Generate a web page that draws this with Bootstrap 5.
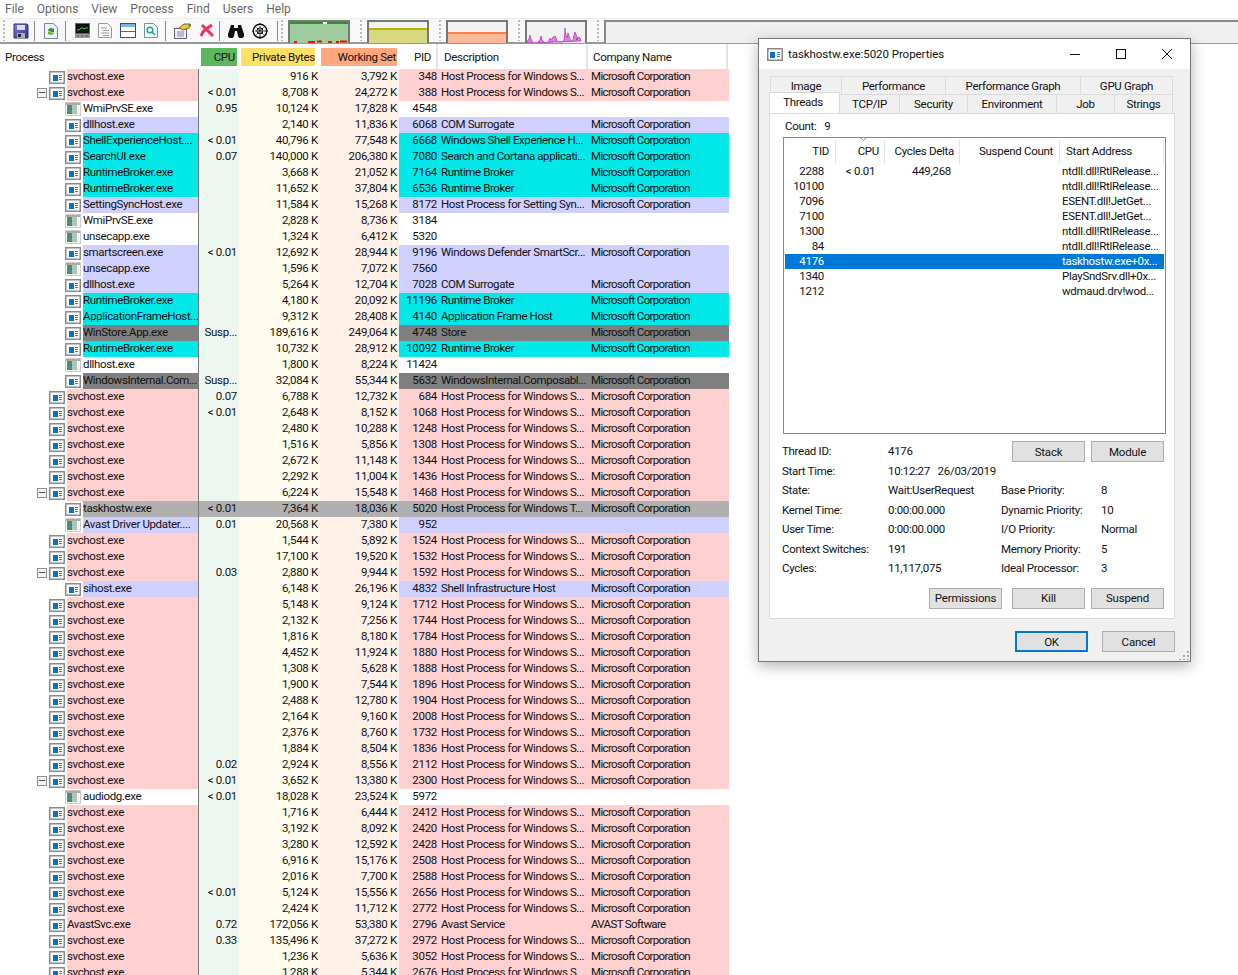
<!DOCTYPE html>
<html lang="en"><head><meta charset="utf-8"><title>Process Explorer</title>
<link rel="stylesheet" href="https://cdn.jsdelivr.net/npm/bootstrap@5.3.0/dist/css/bootstrap.min.css">
<style>
html,body{height:975px;overflow:hidden;background:#fff}
body{font:11.5px/16px Roboto,"Liberation Sans",sans-serif;letter-spacing:-.3px;color:#111;position:relative}
.menubar{height:18px;padding-left:5px;gap:13px;color:#666;font-size:12px;line-height:19px;letter-spacing:0}
.menubar span{display:block}
.toolbar{height:26px;background:#f8f8f8;border-bottom:2px solid #999;border-top:1px solid #eee}
.tb{flex:none;display:block}
.grip{width:2px;height:21px;flex:none;background:repeating-linear-gradient(#bbb 0 2px,transparent 2px 4px)}
.sep{width:1px;height:20px;background:#888;flex:none}
.graph{width:62px;height:23px;flex:none;border:2px solid #777;border-bottom:0;display:block;margin-top:2px}
.m3{margin-left:3px}.m4{margin-left:4px}.m5{margin-left:5px}.m7{margin-left:7px}.m8{margin-left:8px}.m9{margin-left:9px}.m10{margin-left:10px}
.blank{width:634px;height:23px;border:2px solid #888;border-right:0;border-bottom:0;flex:none;background:#f0f0f0;margin:2px 0 0 5px}
.col-p{width:199px}.col-c{width:40px}.col-pb{width:81px}.col-ws{width:79px}.col-pid{width:40px}.col-d{width:150px}.col-co{width:140px}
.hdr{height:25px;align-items:center;white-space:nowrap}
.hdr>div{flex:none;height:18px;line-height:19px}
.hdr .col-p{padding-left:5px;border:0}
.hdr .h-c{background:#5cb85c;margin-left:2px;width:36px;text-align:right;padding-right:2px}
.hdr .h-pb{background:#ffdf66;margin-left:4px;width:74px;text-align:right}
.hdr .h-ws{background:#ffa77d;margin-left:6px;width:76px;text-align:right;padding-right:1px}
.hdr .col-pid{text-align:right;padding-right:5px;border-right:2px solid #e4e4e4;width:41px;height:25px;line-height:26px}
.hdr .col-d{border-right:2px solid #e4e4e4;width:150px;padding-left:6px;height:25px;line-height:26px}
.hdr .col-co{width:140px;padding-left:5px;border-right:2px solid #e4e4e4;height:25px;line-height:26px}
.stripes{height:906px;overflow:hidden}
.row-p{height:16px;line-height:15px;width:729px;white-space:nowrap}
.row-p>div{flex:none;overflow:hidden}
.row-p .col-p{border-right:1px solid #777;display:flex;align-items:center}
.row-p .col-c{background:#edf7ef;padding-right:2px;text-align:right}
.row-p .col-pb{background:#fffbee;text-align:right;padding-right:2px}
.row-p .col-ws{background:#fff0e8;padding-right:2px;text-align:right}
.row-p .col-pid{padding-right:2px;text-align:right}
.row-p .col-d{padding-left:2px;letter-spacing:-.4px}
.row-p .col-co{padding-left:2px;letter-spacing:-.65px}
.box{width:10px;height:10px;border:1px solid #919191;background:#f4f4f4;margin:0 2px 0 37px;position:relative;flex:none}
.box:after{content:"";position:absolute;left:1px;right:1px;top:3px;height:1px;background:#444}
.sp0{width:49px;flex:none}.sp1{width:65px;flex:none}
.ic{flex:none;display:block;margin-right:2px}
.name{flex:1;min-width:0;height:16px;overflow:hidden;letter-spacing:-.36px}
.pink .name,.pink .rest{background:#ffd0d0}.blue .name,.blue .rest{background:#d0d0ff}
.cyan .name,.cyan .rest{background:#00e8e8}.gray .name,.gray .rest{background:#808080}
.sel .name,.sel .rest,.sel .col-c,.sel .col-pb,.sel .col-ws{background:#b0b0b0!important}
.rest{display:flex;flex:none;width:330px}
.rest>div{flex:none;overflow:hidden}
.dlg{position:absolute;left:758px;top:38px;width:433px;height:624px;background:#f0f0f0;border:1px solid #777;box-shadow:0 4px 14px rgba(0,0,0,.3)}
.tbar{height:30px;background:#fff;padding:0 0 0 8px;font-size:11.5px;letter-spacing:-.05px;color:#111}
.wbtn{width:46px;height:30px;flex:none;display:block}
.tabs{margin:7px 0 0 10px;width:406px}
.tr{display:flex;height:18px;margin-left:1px}
.tr>div{border:1px solid #dcdcdc;border-bottom:0;border-left:0;text-align:center;line-height:19px;flex:none}
.tr>div:first-child{border-left:1px solid #dcdcdc}
.tr2{margin-left:0;height:19px}
.tab-a{background:#fff;margin-top:-2px;height:21px;position:relative;z-index:1;border-color:#d9d9d9!important}
.t1{width:72px}.t2{width:104px}.t3{width:135px}.t4{width:92px}.u1{width:71px;padding-right:3px}.u2{width:60px}.u3{width:68px}.u4{width:89px}.u5{width:58px}.u6{width:58px}
.panel{background:#fff;border:1px solid #d9d9d9;width:406px;height:506px;margin:0 0 0 10px;padding:5px 8px 0 13px}
.count{height:18px;line-height:14px;padding-left:2px}
.lv{width:383px;height:297px;border:1px solid #888;padding:2px 1px}
.lvh{height:24px;line-height:23px}
.lvh>div{flex:none;border-right:1px solid #e4e4e4;height:24px;text-align:right;position:relative}
.lvr{height:15px;line-height:14px;white-space:nowrap}
.lvr>div{flex:none;overflow:hidden}
.w1{width:51px;padding-right:6px}.w2{width:49px;padding-right:5px}.w3{width:75px;padding-right:5px}.w4{width:100px;padding-right:6px}.w5{width:104px}
.lvr .w1{text-align:right;padding-right:12px}.lvr .w2{text-align:center;padding-right:0}.lvr .w3{text-align:right;padding-right:9px;margin-left:-9px;width:84px}
.lvr .w5{padding-left:2px}
.lvh .w5{padding-left:6px;text-align:left}
.lvsel{background:#0078d7;color:#fff}
.caret{position:absolute;left:24px;top:-3px;width:7px;height:4px}
.irow{height:19.5px;line-height:19.5px;display:flex;align-items:center;margin-left:-1px}
.irow>span{flex:none}
.l1{width:106px}.v1{width:113px}.l2{width:100px}.v2{width:60px}
.wbtn2{width:73px;height:21px;background:#e1e1e1;border:1px solid #adadad;color:#111;font-size:11.5px;line-height:18px;padding:0;border-radius:0;letter-spacing:-.2px;flex:none}
.btnrow{gap:6px;margin-left:auto;margin-right:2px}
.bt3{margin-top:9px;gap:6px}
.kill{margin-left:4px}
.btm{margin:12px 0 0 0;padding-right:15px;gap:14px}
.btn-ok{border:2px solid #0078d7}
.rz{position:absolute;right:1px;bottom:1px;width:10px;height:10px}
</style></head><body>
<div class="menubar d-flex"><span>File</span><span>Options</span><span>View</span><span>Process</span><span>Find</span><span>Users</span><span>Help</span></div>
<div class="toolbar d-flex align-items-center">
<span class="grip m3"></span>
<svg class="tb m8" width="16" height="16" viewBox="0 0 16 16"><defs><linearGradient id="fl" x1="0" y1="0" x2="1" y2="1"><stop offset="0" stop-color="#7f7fe0"/><stop offset="1" stop-color="#2d2d80"/></linearGradient></defs><path d="M1 1h13l1 1v13H1z" fill="url(#fl)" stroke="#33336a"/><rect x="4" y="2" width="8" height="5" fill="#dcdcf4"/><rect x="4" y="10" width="8" height="5" fill="#aaa"/><rect x="5" y="11" width="3" height="3" fill="#222"/></svg>
<span class="sep m5"></span>
<svg class="tb m9" width="14" height="16" viewBox="0 0 14 16"><path d="M.5.500h9l4 4v11H.5z" fill="#eef0fa" stroke="#7a86a8"/><path d="M4 7a3 3 0 0 1 5-1l1-1v4H6l1-1a2 2 0 0 0-2 1z" fill="#2a9a2a"/><path d="M10 10a3 3 0 0 1-5 1l-1 1V9h4l-1 1a2 2 0 0 0 2-1z" fill="#6cb82a"/></svg>
<span class="sep m7"></span>
<svg class="tb m9" width="15" height="15" viewBox="0 0 15 15"><rect x=".5" y=".5" width="14" height="10" fill="#111" stroke="#666"/><path d="M2 7h2l2-2h2l1 1 2-1h2" fill="none" stroke="#2ee02e"/><rect y="11" width="15" height="4" fill="#999"/><path d="M2 13h2M6 13h2M10 13h3" stroke="#555"/></svg>
<svg class="tb m8" width="14" height="15" viewBox="0 0 14 15"><path d="M.5.500h9l4 4v10H.5z" fill="#fafafa" stroke="#999"/><path d="M3 5h6M5 7.500h6M3 10h8M5 12.500h6" stroke="#999"/></svg>
<svg class="tb m8" width="16" height="15" viewBox="0 0 16 15"><rect x=".5" y=".5" width="15" height="14" fill="#fff" stroke="#2f4f80"/><rect x="1" y="1" width="14" height="3" fill="#7fb2e5"/><path d="M1 8.500h14" stroke="#3a6ea8"/></svg>
<svg class="tb m8" width="14" height="15" viewBox="0 0 14 15"><path d="M.5.500h9l4 4v10H.5z" fill="#f4fbfb" stroke="#6a9a9a"/><circle cx="6" cy="7" r="2.800" fill="none" stroke="#2b9a9a" stroke-width="1.500"/><path d="M8 9l3 3" stroke="#2b9a9a" stroke-width="1.500"/></svg>
<span class="sep m7"></span>
<svg class="tb m8" width="17" height="16" viewBox="0 0 17 16"><rect x=".5" y="5.500" width="12" height="10" fill="#eef" stroke="#667"/><path d="M3 9h7M3 11h7M3 13h7" stroke="#88a"/><path d="M5 5l5-4h6l-1 4-6 2z" fill="#e8c04a" stroke="#8a6a10"/><path d="M14 1h3v3z" fill="#2a9a4a"/></svg>
<svg class="tb m9" width="15" height="15" viewBox="0 0 15 15"><path d="M2 2l11 11" stroke="#f0305a" stroke-width="3"/><path d="M12 2L6 6l-3 3-2 4" fill="none" stroke="#f0305a" stroke-width="3"/></svg>
<span class="sep m4"></span>
<svg class="tb m8" width="16" height="14" viewBox="0 0 16 14"><path d="M3 1h3v3h4V1h3l3 9a3 3 0 0 1-6 2L9 7H7l-1 5a3 3 0 0 1-6-2z" fill="#111"/></svg>
<svg class="tb m8" width="16" height="16" viewBox="0 0 16 16"><circle cx="8" cy="8" r="6.800" fill="#fff" stroke="#111" stroke-width="1.400"/><circle cx="8" cy="8" r="3" fill="none" stroke="#111"/><path d="M8 0v16M0 8h16M3 3l10 10M13 3L3 13" stroke="#111" stroke-dasharray="2 1"/></svg>
<span class="sep m9"></span>
<span class="grip m3"></span>
<svg class="graph m5" viewBox="0 0 58 21"><rect width="58" height="21" fill="#9fcc9f"/><rect width="58" height="2" fill="#2f8f2f"/><rect x="33" width="4" height="2" fill="#fff"/><path d="M4 20h3M18 20h7M27 19.500h5M38 20h4M46 20h3M50 19.500h7" stroke="#e81010" stroke-width="2"/></svg>
<span class="grip m10"></span>
<svg class="graph m5" viewBox="0 0 58 21"><rect width="58" height="21" fill="#f2f2f2"/><rect y="6" width="58" height="15" fill="#d8d880"/><rect y="6" width="58" height="2" fill="#b5b500"/></svg>
<span class="grip m10"></span>
<svg class="graph m5" viewBox="0 0 58 21"><rect width="58" height="21" fill="#f2f2f2"/><rect y="10" width="58" height="11" fill="#ffb899"/><rect y="10" width="58" height="2" fill="#ff7f3f"/></svg>
<span class="grip m10"></span>
<svg class="graph m5" viewBox="0 0 58 21"><rect width="58" height="21" fill="#f2f2f2"/><path d="M0 21l1-3 1-1 1-4 1 4 1 2 1 2h4l2-2 1-1 1-4 1 4 1 1 2 2h3l2-5 1 2 1-1 1-2 2-1 1 2 1 3 1 1h5l1-2 1-8 2 6 1-5 2 6 1 2h2l1-6 1-3 2 5 1 1 1-1 1 1 1 3z" fill="#e080e0" stroke="#b030b0" stroke-width=".7"/><path d="M38 6v4M50 16v2" stroke="#3030e0"/></svg>
<span class="grip m10"></span>
<span class="blank"></span>
</div>
<div class="hdr d-flex">
<div class="col-p">Process</div><div class="h-c">CPU</div><div class="h-pb">Private Bytes</div><div class="h-ws">Working Set</div><div class="col-pid">PID</div><div class="col-d">Description</div><div class="col-co">Company Name</div>
</div>
<div class="stripes" id="rows"></div>

<div class="dlg">
<div class="tbar d-flex align-items-center">
<svg width="16" height="13" viewBox="0 0 16 13"><rect x=".75" y=".75" width="14.500" height="11.500" fill="#fff" stroke="#888" stroke-width="1.500"/><rect x="3" y="4" width="5" height="6" fill="#0a6fd0"/><path d="M10 4.500h3M10 6.500h3M10 8.500h3" stroke="#4a78b0"/></svg>
<span class="m5">taskhostw.exe:5020 Properties</span>
<svg class="wbtn ms-auto" viewBox="0 0 46 30"><path d="M18 15.500h10" stroke="#111"/></svg>
<svg class="wbtn" viewBox="0 0 46 30"><rect x="18.500" y="10.500" width="9" height="9" fill="none" stroke="#111"/></svg>
<svg class="wbtn" viewBox="0 0 46 30"><path d="M18 10l10 10M28 10L18 20" stroke="#111"/></svg>
</div>
<div class="tabs">
<div class="tr"><div class="t1">Image</div><div class="t2">Performance</div><div class="t3">Performance Graph</div><div class="t4">GPU Graph</div></div>
<div class="tr tr2"><div class="tab-a u1">Threads</div><div class="u2">TCP/IP</div><div class="u3">Security</div><div class="u4">Environment</div><div class="u5">Job</div><div class="u6">Strings</div></div>
</div>
<div class="panel">
<div class="count">Count:&nbsp;&nbsp;&nbsp;9</div>
<div class="lv">
<div class="lvh d-flex"><div class="w1">TID</div><div class="w2"><svg class="caret" viewBox="0 0 7 4"><path d="M0 0l3.500 3.500L7 0" fill="none" stroke="#888"/></svg>CPU</div><div class="w3">Cycles Delta</div><div class="w4">Suspend Count</div><div class="w5">Start Address</div></div>
<div id="threads"></div>
</div>
<div class="mt-2">
<div class="irow"><span class="l1">Thread ID:</span><span>4176</span><div class="btnrow d-flex"><button class="btn wbtn2">Stack</button><button class="btn wbtn2">Module</button></div></div>
<div class="irow"><span class="l1">Start Time:</span><span>10:12:27&nbsp;&nbsp; 26/03/2019</span></div>
<div class="irow"><span class="l1">State:</span><span class="v1">Wait:UserRequest</span><span class="l2">Base Priority:</span><span class="v2">8</span></div>
<div class="irow"><span class="l1">Kernel Time:</span><span class="v1">0:00:00.000</span><span class="l2">Dynamic Priority:</span><span class="v2">10</span></div>
<div class="irow"><span class="l1">User Time:</span><span class="v1">0:00:00.000</span><span class="l2">I/O Priority:</span><span class="v2">Normal</span></div>
<div class="irow"><span class="l1">Context Switches:</span><span class="v1">191</span><span class="l2">Memory Priority:</span><span class="v2">5</span></div>
<div class="irow"><span class="l1">Cycles:</span><span class="v1">11,117,075</span><span class="l2">Ideal Processor:</span><span class="v2">3</span></div>
<div class="d-flex btnrow bt3 justify-content-end"><button class="btn wbtn2">Permissions</button><button class="btn wbtn2 kill">Kill</button><button class="btn wbtn2">Suspend</button></div>
</div>
</div>
<div class="d-flex justify-content-end btm"><button class="btn wbtn2 btn-ok">OK</button><button class="btn wbtn2">Cancel</button></div>
<svg class="rz" viewBox="0 0 10 10"><path d="M8 1h2v2H8zM4 5h2v2H4zM8 5h2v2H8zM0 9h2v1H0zM4 9h2v1H4zM8 9h2v1H8z" fill="#aaa"/></svg>
</div>

<script>
var H='Host Process for Windows S...',M='Microsoft Corporation',R='Runtime Broker',L='< 0.01';
function s(c,pb,ws,pid,o){return Object.assign({n:'svchost.exe',l:0,k:'pink',i:1,c:c,pb:pb,ws:ws,pid:pid,d:H,co:M},o||{})}
function k(n,k_,i,c,pb,ws,pid,d,co){return {n:n,l:1,k:k_,i:i,c:c,pb:pb,ws:ws,pid:pid,d:d,co:co}}
var X={x:1},data=[
s('','916','3,792','348'),s(L,'8,708','24,272','388',X),
k('WmiPrvSE.exe','',2,'0.95','10,124','17,828','4548','',''),
k('dllhost.exe','blue',1,'','2,140','11,836','6068','COM Surrogate',M),
k('ShellExperienceHost....','cyan',1,L,'40,796','77,548','6668','Windows Shell Experience H...',M),
k('SearchUI.exe','cyan',1,'0.07','140,000','206,380','7080','Search and Cortana applicati...',M),
k('RuntimeBroker.exe','cyan',1,'','3,668','21,052','7164',R,M),
k('RuntimeBroker.exe','cyan',1,'','11,652','37,804','6536',R,M),
k('SettingSyncHost.exe','blue',1,'','11,584','15,268','8172','Host Process for Setting Syn...',M),
k('WmiPrvSE.exe','',2,'','2,828','8,736','3184','',''),
k('unsecapp.exe','',2,'','1,324','6,412','5320','',''),
k('smartscreen.exe','blue',1,L,'12,692','28,944','9196','Windows Defender SmartScr...',M),
k('unsecapp.exe','blue',2,'','1,596','7,072','7560','',''),
k('dllhost.exe','blue',1,'','5,264','12,704','7028','COM Surrogate',M),
k('RuntimeBroker.exe','cyan',1,'','4,180','20,092','11196',R,M),
k('ApplicationFrameHost...','cyan',1,'','9,312','28,408','4140','Application Frame Host',M),
k('WinStore.App.exe','gray',1,'Susp...','189,616','249,064','4748','Store',M),
k('RuntimeBroker.exe','cyan',1,'','10,732','28,912','10092',R,M),
k('dllhost.exe','',2,'','1,800','8,224','11424','',''),
k('WindowsInternal.Com...','gray',1,'Susp...','32,084','55,344','5632','WindowsInternal.Composabl...',M),
s('0.07','6,788','12,732','684'),s(L,'2,648','8,152','1068'),s('','2,480','10,288','1248'),s('','1,516','5,856','1308'),
s('','2,672','11,148','1344'),s('','2,292','11,004','1436'),s('','6,224','15,548','1468',X),
k('taskhostw.exe','sel',1,L,'7,364','18,036','5020','Host Process for Windows T...',M),
k('Avast Driver Updater....','blue',2,'0.01','20,568','7,380','952','',''),
s('','1,544','5,892','1524'),s('','17,100','19,520','1532'),s('0.03','2,880','9,944','1592',X),
k('sihost.exe','blue',1,'','6,148','26,196','4832','Shell Infrastructure Host',M),
s('','5,148','9,124','1712'),s('','2,132','7,256','1744'),s('','1,816','8,180','1784'),s('','4,452','11,924','1880'),
s('','1,308','5,628','1888'),s('','1,900','7,544','1896'),s('','2,488','12,780','1904'),s('','2,164','9,160','2008'),
s('','2,376','8,760','1732'),s('','1,884','8,504','1836'),s('0.02','2,924','8,556','2112'),s(L,'3,652','13,380','2300',X),
k('audiodg.exe','',2,L,'18,028','23,524','5972','',''),
s('','1,716','6,444','2412'),s('','3,192','8,092','2420'),s('','3,280','12,592','2428'),s('','6,916','15,176','2508'),
s('','2,016','7,700','2588'),s(L,'5,124','15,556','2656'),s('','2,424','11,712','2772'),
s('0.72','172,056','53,380','2796',{n:'AvastSvc.exe',d:'Avast Service',co:'AVAST Software'}),
s('0.33','135,496','37,272','2972'),s('','1,236','5,636','3052'),s('','1,288','5,344','2676')];
var I1='<svg class="ic" width="16" height="13" viewBox="0 0 16 13"><rect x=".75" y=".75" width="14.500" height="11.500" fill="#fff" stroke="#8a8a8a" stroke-width="1.500"/><rect x="4" y="4" width="5" height="6" fill="#0a6fd0"/><path d="M10 4.500h3M10 6.500h3M10 8.500h3" stroke="#4a78b0"/></svg>';
var I2='<svg class="ic" width="16" height="14" viewBox="0 0 16 14"><rect x=".5" y=".5" width="15" height="13" fill="#f4f4f4" stroke="#ccc"/><rect x="1" y="1" width="14" height="2" fill="#aaa"/><rect x="2" y="3" width="5" height="9" fill="#4d8a76"/><rect x="7" y="3" width="5" height="9" fill="#aec4b8"/></svg>';
var e=function(t){return String(t).replace(/</g,'&lt;')};
document.getElementById('rows').innerHTML=data.map(function(r){
 var c=r.x?'<span class="box"></span>':'<span class="sp'+r.l+'"></span>';
 return '<div class="row-p d-flex '+r.k+'"><div class="col-p">'+c+(r.i==1?I1:I2)+'<div class="name">'+e(r.n)+'</div></div>'+
 '<div class="col-c">'+e(r.c)+'</div><div class="col-pb">'+r.pb+' K</div><div class="col-ws">'+r.ws+' K</div>'+
 '<div class="rest"><div class="col-pid">'+r.pid+'</div><div class="col-d">'+e(r.d)+'</div><div class="col-co">'+r.co+'</div></div></div>';
}).join('');
var t=[['2288',L,'449,268','ntdll.dll!RtlRelease...'],['10100','','','ntdll.dll!RtlRelease...'],['7096','','','ESENT.dll!JetGet...'],['7100','','','ESENT.dll!JetGet...'],['1300','','','ntdll.dll!RtlRelease...'],['84','','','ntdll.dll!RtlRelease...'],['4176','','','taskhostw.exe+0x...'],['1340','','','PlaySndSrv.dll+0x...'],['1212','','','wdmaud.drv!wod...']];
document.getElementById('threads').innerHTML=t.map(function(r,i){return '<div class="lvr d-flex'+(i==6?' lvsel':'')+'"><div class="w1">'+r[0]+'</div><div class="w2">'+e(r[1])+'</div><div class="w3">'+r[2]+'</div><div class="w4"></div><div class="w5">'+r[3]+'</div></div>'}).join('');
</script>
<script src="https://cdn.jsdelivr.net/npm/bootstrap@5.3.0/dist/js/bootstrap.bundle.min.js"></script>
</body></html>
